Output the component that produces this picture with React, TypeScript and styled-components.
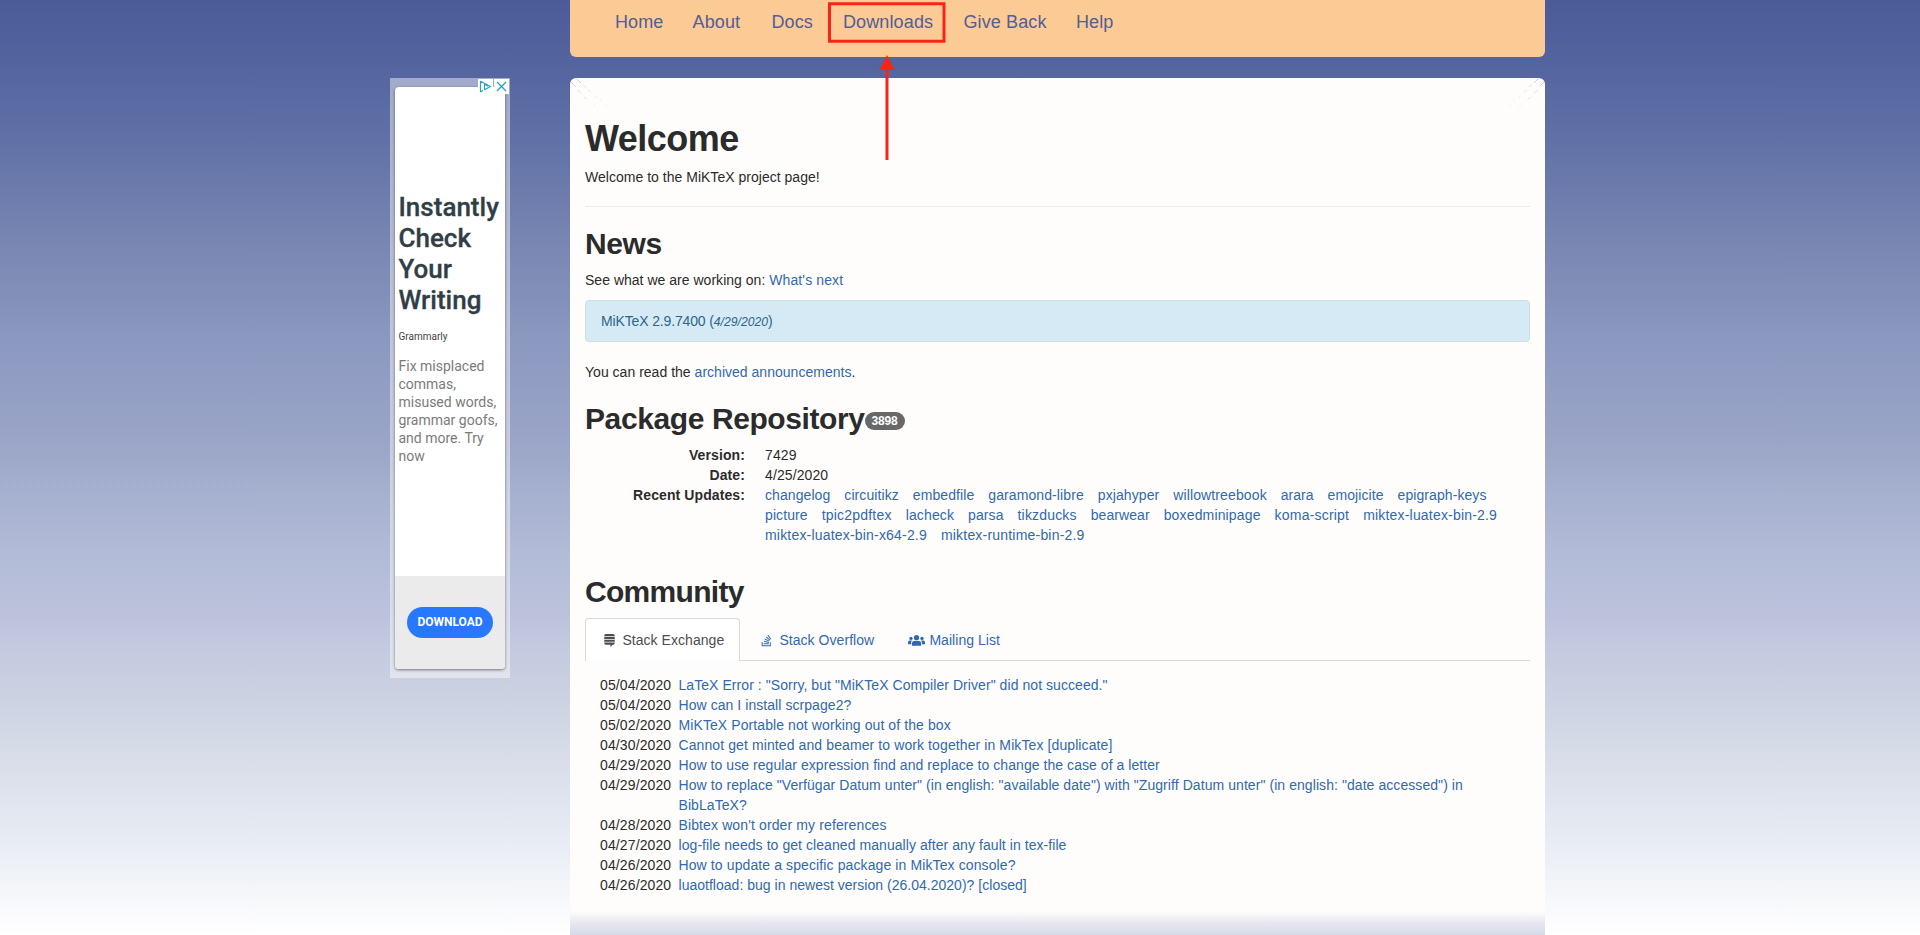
import React from "react";
import styled, { createGlobalStyle } from "styled-components";
import { FaStackExchange, FaStackOverflow } from "react-icons/fa";

const GlobalStyle = createGlobalStyle`
  * { box-sizing: border-box; }
  html { height: 935px; overflow: hidden; }
  body {
    margin: 0;
    height: 935px;
    overflow: hidden;
    background: linear-gradient(180deg, #4b5b98 0px, #5666a0 78px, #6373a8 149px, #7785b1 238px, #8a97bf 334px, #9ba6c8 447px, #a9b3d1 507px, #b4bdd8 566px, #bcc2dc 614px, #c3c9df 645px, #d0d5e4 715px, #dadfea 769px, #e9edf5 847px, #ffffff 935px);
    color: #2b2b2b;
    font: 14px/20px "Liberation Sans", Arial, sans-serif;
  }
`;

const Page = styled.div`
  display: flex;
  align-items: flex-start;
  width: 1155px;
  height: 935px;
  margin-left: 390px;
  overflow: hidden;
`;

const Sidebar = styled.aside`
  width: 120px;
  height: 600px;
  margin: 78px 60px 0 0;
  padding: 9px 5px;
  position: relative;
  background: rgba(255, 255, 255, 0.45);
  font-family: Roboto, sans-serif;
`;

const AdCard = styled.div`
  display: flex;
  flex-direction: column;
  height: 582px;
  border-radius: 4px;
  overflow: hidden;
  background: #fff;
  box-shadow: 0 1px 3px rgba(0, 0, 0, 0.5);
`;

const AdBody = styled.div`
  flex: 1;
  padding: 105px 0 0 3.5px;
`;

const AdTitle = styled.div`
  color: #303e47;
  font-size: 26px;
  font-weight: 500;
  line-height: 31px;
  -webkit-text-stroke: 0.3px #303e47;
`;

const AdBrand = styled.div`
  margin-top: 14px;
  color: #444;
  font-size: 10px;
  line-height: 14px;
`;

const AdText = styled.div`
  margin-top: 13px;
  color: #7b7b7b;
  font-size: 14px;
  line-height: 18px;
`;

const AdFooter = styled.div`
  display: flex;
  align-items: flex-start;
  justify-content: center;
  height: 93px;
  padding-top: 31px;
  background: #ebebeb;
`;

const AdButton = styled.div`
  width: 86px;
  height: 31px;
  border-radius: 16px;
  background: #2878ff;
  color: #fff;
  font-size: 12px;
  font-weight: 700;
  line-height: 30px;
  text-align: center;
`;

const AdChoices = styled.svg`
  position: absolute;
  top: 1px;
  right: 1px;
`;

const Main = styled.div`
  width: 975px;
`;

const Nav = styled.nav`
  display: flex;
  align-items: flex-start;
  height: 57px;
  padding: 12px 0 0 30px;
  border-radius: 0 0 6px 6px;
  background: #fcca94;
`;

const NavLink = styled.a<{ $width: number }>`
  width: ${(p) => p.$width}px;
  padding-left: 15px;
  color: #4f5f99;
  font-size: 18px;
  line-height: 20px;
  letter-spacing: 0.12px;
  white-space: nowrap;
`;

const Content = styled.main`
  position: relative;
  height: 857px;
  margin-top: 21px;
  padding: 0 15px;
  border-radius: 6px 6px 0 0;
  background: #fffdfc;
`;

const Corner = styled.svg<{ $right?: boolean }>`
  position: absolute;
  top: 0;
  ${(p) => (p.$right ? "right: 0; transform: scaleX(-1);" : "left: 0;")}
`;

const Title = styled.h1`
  margin: 0;
  padding-top: 41px;
  font-size: 36px;
  line-height: 40px;
  font-weight: 700;
  letter-spacing: -0.5px;
`;

const Heading = styled.h2<{ $top: number; $tracking?: number }>`
  display: flex;
  align-items: center;
  margin: ${(p) => p.$top}px 0 10px;
  font-size: 30px;
  line-height: 33px;
  font-weight: 700;
  letter-spacing: ${(p) => p.$tracking ?? -0.4}px;
`;

const Paragraph = styled.p<{ $top?: number }>`
  margin: ${(p) => p.$top ?? 0}px 0 10px;
  letter-spacing: 0.02px;
`;

const Rule = styled.hr`
  height: 1px;
  margin: 19px 0 20px;
  border: 0;
  background: #ebebea;
`;

const Link = styled.a<{ $tracking?: number }>`
  color: #3069b0;
  letter-spacing: ${(p) => p.$tracking ?? 0.12}px;
`;

const Alert = styled.div`
  height: 42px;
  padding: 10px 15px;
  border: 1px solid #cddde2;
  border-radius: 4px;
  background: #d6eaf5;
  color: #2d648a;
  letter-spacing: -0.14px;
  em { font-size: 12.2px; letter-spacing: 0; }
`;

const Badge = styled.span`
  height: 18px;
  margin-top: 5px;
  padding: 0 7px;
  border-radius: 9px;
  background: #686868;
  color: #fff;
  font-size: 12px;
  line-height: 18px;
  letter-spacing: -0.2px;
`;

const Facts = styled.dl`
  display: grid;
  grid-template-columns: 160px 765px;
  column-gap: 20px;
  margin: 0;
  letter-spacing: 0.1px;
  dt { font-weight: 700; text-align: right; }
  dd { margin: 0; }
`;

const PackageLink = styled(Link)`
  margin-right: 10px;
  white-space: nowrap;
`;

const Tabs = styled.div`
  display: flex;
  gap: 2px;
  height: 43px;
  border-bottom: 1px solid #d8d8d8;
`;

const Tab = styled.div<{ $active?: boolean; $width: number }>`
  display: flex;
  align-items: center;
  width: ${(p) => p.$width}px;
  height: 43px;
  padding-left: 15px;
  border: 1px solid ${(p) => (p.$active ? "#d8d8d8" : "transparent")};
  border-bottom: 0;
  border-radius: 4px 4px 0 0;
  background: ${(p) => (p.$active ? "#fff" : "transparent")};
  color: ${(p) => (p.$active ? "#4d4d4d" : "#3069b0")};
  letter-spacing: 0.05px;
  white-space: nowrap;
`;

const TabIcon = styled.span`
  display: flex;
  justify-content: center;
  width: 17.5px;
  margin-right: 3.9px;
  padding-top: 1px;
  svg { flex: none; }
`;

const Questions = styled.ul`
  list-style: none;
  margin: 14px 0 0;
  padding: 0 15px;
`;

const Question = styled.li`
  display: grid;
  grid-template-columns: 78.5px 800px;
`;

const QuestionDate = styled.span`
  letter-spacing: 0.12px;
`;

const Fade = styled.div`
  position: absolute;
  left: 0;
  right: 0;
  bottom: 0;
  height: 24px;
  background: linear-gradient(180deg, #fffdfc 0%, #e6e7f0 50%, #d5d9e9 100%);
`;

const Callout = styled.svg`
  position: absolute;
  left: 820px;
  top: 0;
`;

const navItems: [string, number][] = [
  ["Home", 77.5],
  ["About", 79],
  ["Docs", 71.5],
  ["Downloads", 120.5],
  ["Give Back", 112.5],
  ["Help", 70],
];

const packages: [string, number][] = [
  ["changelog", 0.08],
  ["circuitikz", 0.08],
  ["embedfile", 0.08],
  ["garamond-libre", 0.1],
  ["pxjahyper", 0.08],
  ["willowtreebook", 0.12],
  ["arara", 0.02],
  ["emojicite", 0.08],
  ["epigraph-keys", 0.08],
  ["picture", 0.1],
  ["tpic2pdftex", 0.2],
  ["lacheck", 0.14],
  ["parsa", 0.08],
  ["tikzducks", 0.18],
  ["bearwear", 0.07],
  ["boxedminipage", 0.15],
  ["koma-script", 0.2],
  ["miktex-luatex-bin-2.9", 0.19],
  ["miktex-luatex-bin-x64-2.9", 0.19],
  ["miktex-runtime-bin-2.9", 0.2],
];

const questions: [string, string, number][] = [
  ["05/04/2020", 'LaTeX Error : "Sorry, but "MiKTeX Compiler Driver" did not succeed."', 0.06],
  ["05/04/2020", "How can I install scrpage2?", 0.06],
  ["05/02/2020", "MiKTeX Portable not working out of the box", 0.09],
  ["04/30/2020", "Cannot get minted and beamer to work together in MikTex [duplicate]", 0.1],
  ["04/29/2020", "How to use regular expression find and replace to change the case of a letter", 0.055],
  ["04/29/2020", 'How to replace "Verfügar Datum unter" (in english: "available date") with "Zugriff Datum unter" (in english: "date accessed") in BibLaTeX?', 0.068],
  ["04/28/2020", "Bibtex won't order my references", 0.12],
  ["04/27/2020", "log-file needs to get cleaned manually after any fault in tex-file", 0.065],
  ["04/26/2020", "How to update a specific package in MikTex console?", 0.11],
  ["04/26/2020", "luaotfload: bug in newest version (26.04.2020)? [closed]", 0.02],
];

const CornerMark = ({ right }: { right?: boolean }) => (
  <Corner $right={right} width="40" height="34" viewBox="0 0 40 34" fill="none" stroke="#a9add0" strokeWidth="0.6">
    <path d="M6.500 .5l4.500 4.500M1 4l4.500 4.500" />
    <path d="M13 6.500l3 3M7.500 12l3.500 3.500" strokeOpacity="0.7" />
    <path d="M18 11.500l3 3M14 18.500l3 3" strokeOpacity="0.6" />
    <path d="M24 17.500l2.500 2.500M24 26.500l1.500 1.500M30 21l1.500 1.500M35 26l1 1" strokeOpacity="0.4" />
  </Corner>
);

const GroupIcon = () => (
  <svg width="17" height="11" viewBox="0 0 17 11" fill="currentColor">
    <circle cx="3" cy="3.400" r="1.700" />
    <circle cx="14" cy="3.400" r="1.700" />
    <circle cx="8.500" cy="2.700" r="2.600" />
    <path d="M0 9.200V7.300q0-1.700 1.700-1.700h2.200q-.9 1-.9 3.600z" />
    <path d="M17 9.200V7.300q0-1.700-1.700-1.700h-2.200q.9 1 .9 3.600z" />
    <path d="M3.900 10.700V8.300q0-2.300 2.300-2.300h4.600q2.300 0 2.300 2.300v2.400z" />
  </svg>
);

export default function App() {
  return (
    <>
      <GlobalStyle />
      <Page>
        <Sidebar>
          <AdCard>
            <AdBody>
              <AdTitle>Instantly<br />Check<br />Your<br />Writing</AdTitle>
              <AdBrand>Grammarly</AdBrand>
              <AdText>Fix misplaced<br />commas,<br />misused words,<br />grammar goofs,<br />and more. Try<br />now</AdText>
            </AdBody>
            <AdFooter><AdButton>DOWNLOAD</AdButton></AdFooter>
          </AdCard>
          <AdChoices width="31" height="15" viewBox="0 0 31 15" fill="none" stroke="#25a2c6">
            <path d="M0 0h15v15H0zM16 0h15v15H16z" fill="#fff" stroke="none" />
            <path d="M5 11.500l-2.500 1.200V2.300L12.500 7.500L6.500 10.800V5l3.500 2.200" strokeWidth="1.2" strokeLinejoin="round" />
            <path d="M19 3l9 9M28 3l-9 9" strokeWidth="1.300" />
          </AdChoices>
        </Sidebar>
        <Main>
          <Nav>
            {navItems.map(([label, width]) => <NavLink key={label} $width={width}>{label}</NavLink>)}
          </Nav>
          <Content>
            <CornerMark />
            <CornerMark right />
            <Title>Welcome</Title>
            <Paragraph $top={8}>Welcome to the MiKTeX project page!</Paragraph>
            <Rule />
            <Heading $top={20}>News</Heading>
            <Paragraph>See what we are working on: <Link>What's next</Link></Paragraph>
            <Alert>MiKTeX 2.9.7400 (<em>4/29/2020</em>)</Alert>
            <Paragraph $top={20}>You can read the <Link $tracking={0.02}>archived announcements</Link>.</Paragraph>
            <Heading $top={20}>Package Repository<Badge>3898</Badge></Heading>
            <Facts>
              <dt>Version:</dt><dd>7429</dd>
              <dt>Date:</dt><dd>4/25/2020</dd>
              <dt>Recent Updates:</dt>
              <dd>
                {packages.map(([name, tracking]) => (
                  <React.Fragment key={name}><PackageLink $tracking={tracking}>{name}</PackageLink>{" "}</React.Fragment>
                ))}
              </dd>
            </Facts>
            <Heading $top={30} $tracking={-0.7}>Community</Heading>
            <Tabs>
              <Tab $active $width={155}><TabIcon><FaStackExchange size={13} /></TabIcon>Stack Exchange</Tab>
              <Tab $width={148}><TabIcon><FaStackOverflow size={13} /></TabIcon>Stack Overflow</Tab>
              <Tab $width={125}><TabIcon><GroupIcon /></TabIcon>Mailing List</Tab>
            </Tabs>
            <Questions>
              {questions.map(([date, title, tracking]) => (
                <Question key={title}>
                  <QuestionDate>{date}</QuestionDate>
                  <Link $tracking={tracking}>{title}</Link>
                </Question>
              ))}
            </Questions>
            <Fade />
          </Content>
        </Main>
      </Page>
      <Callout width="140" height="165" viewBox="0 0 140 165" fill="none" stroke="#f82417" strokeWidth="3">
        <path d="M9.500 3.800h114.500v37.500H9.500z" />
        <path d="M67 160V68" />
        <path d="M67 55l7.500 15h-15z" fill="#f82417" stroke="none" />
      </Callout>
    </>
  );
}
